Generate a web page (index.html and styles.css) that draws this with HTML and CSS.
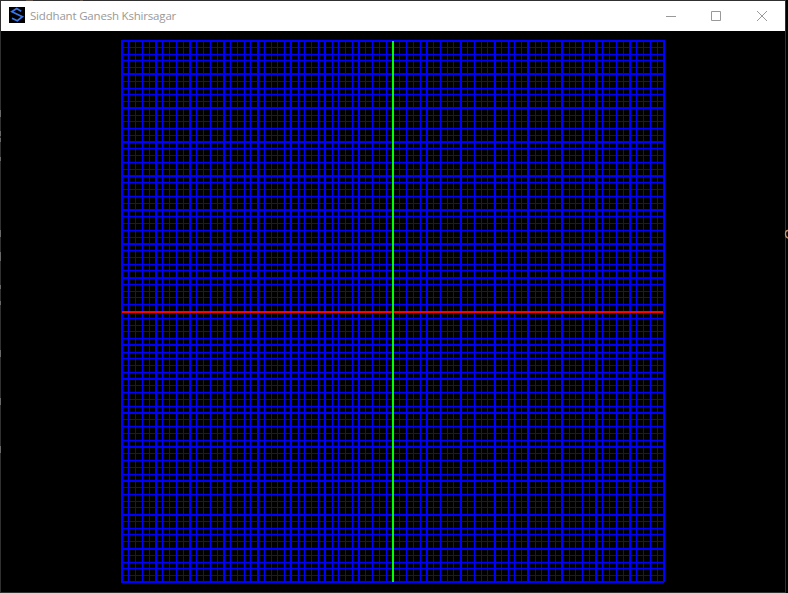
FILE: index.html
```html
<!DOCTYPE html>
<html lang="en">
<head>
<meta charset="utf-8">
<title>Siddhant Ganesh Kshirsagar</title>
<link rel="stylesheet" href="styles.css">
</head>
<body>
<div class="window">
  <header class="titlebar">
    <svg class="logo" viewBox="0 0 16 16"><path d="M12.200 4.200 7.700 1.500 2.800 4.700 13.400 9.700 8.300 13.700 3 11.200"/></svg>
    <h1 class="title">Siddhant Ganesh Kshirsagar</h1>
    <div class="controls">
      <svg class="control" viewBox="0 0 10 10"><path d="M0 5.500H10"/></svg>
      <svg class="control" viewBox="0 0 10 10"><path d="M.5.5h9v9h-9z"/></svg>
      <svg class="control cross" viewBox="0 0 10 10"><path d="M0 0 10 10M10 0 0 10"/></svg>
    </div>
  </header>
  <main class="viewport">
    <svg class="graph" id="graph" viewBox="121 40 544 543"></svg>
  </main>
</div>
<svg class="backdrop" viewBox="0 0 788 593">
  <path class="speck" d="M.5 110v7M.5 131v5M.5 138v4M.5 157v4M.5 230v7M.5 252v9M.5 285v4M.5 301v4M.5 350v7M.5 398v7M.5 446v7"/>
  <path class="hook" d="M788 230.500q-2.500 0-2.500 3.500t2.500 4"/>
  <path class="tick" d="M26 .5h7M80 .5h3"/>
</svg>
<script src="grid.js"></script>
</body>
</html>
```
FILE: styles.css
```css
body {
  margin: 0;
  background: #000;
  overflow: hidden;
}
.window {
  box-sizing: border-box;
  width: 786px;
  height: 593px;
  border: 1px solid #303030;
  display: flex;
  flex-direction: column;
}
.titlebar {
  height: 30px;
  background: #fff;
  display: flex;
  align-items: center;
  padding-left: 8px;
  box-sizing: border-box;
}
.logo {
  width: 16px;
  height: 16px;
  background: #000;
  fill: none;
  stroke: #3c78e8;
  stroke-width: 1.7;
  margin-top: -2px;
}
.title {
  margin: 0 0 0 5px;
  font: 400 11.500px/16px "Open Sans", "Noto Sans", sans-serif;
  letter-spacing: -0.19px;
  color: #999;
  white-space: nowrap;
}
.controls {
  margin-left: auto;
  margin-right: 18px;
  display: flex;
  gap: 35px;
}
.control {
  width: 10px;
  height: 10px;
  fill: none;
  stroke: #999;
  stroke-width: 1;
}
.control.cross {
  margin-left: 1px;
  overflow: visible;
}
.viewport {
  flex: 1;
  padding: 9px 0 0 120px;
}
.graph {
  display: block;
  width: 544px;
  height: 543px;
  shape-rendering: crispEdges;
}
.minor,
.major { fill: #00f; }
.axis-x { fill: #f00; }
.axis-y { fill: #0f0; }

/* Bits of the desktop behind the window that show at its edges */
.backdrop {
  position: absolute;
  inset: 0;
  width: 788px;
  height: 593px;
  pointer-events: none;
  fill: none;
}
.speck { stroke: #686868; }
.hook { stroke: #c8946c; stroke-width: 1.3; }
.tick { stroke: #5c5048; }
```
FILE: grid.js
```javascript
const columns = [
  121,128,135,142,149,155,162,169,176,183,189,196,203,210,217,223,230,237,244,250,
  257,264,271,277,284,290,298,304,311,318,324,332,338,345,352,358,365,372,379,386,
  392,399,406,413,420,426,433,440,447,453,460,467,474,481,487,494,501,508,514,521,
  527,535,541,548,555,561,569,575,582,589,595,602,609,616,623,629,636,643,650,657,663
];
const rows = [
  40,47,54,60,67,73,81,88,94,101,107,115,121,128,135,141,148,155,162,169,
  175,182,189,196,203,209,216,223,230,237,243,250,257,264,270,277,284,291,297,304,
  311,318,325,331,338,344,352,358,365,372,378,385,392,399,406,412,419,426,433,440,
  446,453,460,467,474,480,487,494,501,507,514,521,528,534,541,548,555,562,568,575,581
];
const graph = document.getElementById("graph");

function bar(kind, x, y, width, height) {
  const rect = document.createElementNS("http://www.w3.org/2000/svg", "rect");
  rect.setAttribute("class", kind);
  rect.setAttribute("x", x);
  rect.setAttribute("y", y);
  rect.setAttribute("width", width);
  rect.setAttribute("height", height);
  graph.append(rect);
}

for (const major of [false, true]) {
  const size = major ? 2 : 1;
  const kind = major ? "major" : "minor";
  columns.forEach((x, i) => {
    if ((i % 5 === 0) === major) bar(kind, x, 40, size, 542);
  });
  rows.forEach((y, i) => {
    if ((i % 5 === 0) === major) bar(kind, 121, y, 543, size);
  });
}
bar("axis-x", 122, 311, 541, 2);
bar("axis-y", 392, 41, 2, 541);
```
